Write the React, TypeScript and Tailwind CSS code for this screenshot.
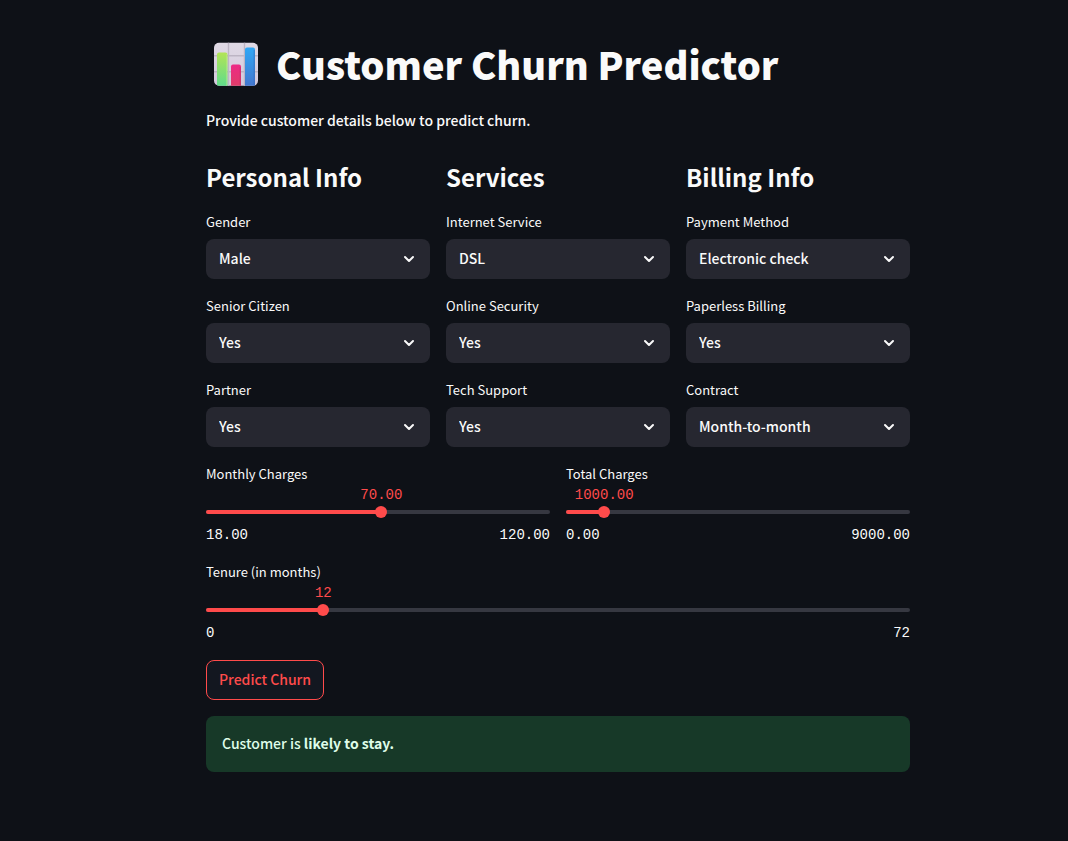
import { useId, useState } from "react";

type SelectFieldProps = { label: string; options: string[] };

function SelectField({ label, options }: SelectFieldProps) {
  const id = useId();
  return (
    <div className="flex flex-col gap-1.5">
      <label htmlFor={id} className="text-[13px] leading-[22px]">
        {label}
      </label>
      <div className="relative">
        <select
          id={id}
          className="h-10 w-full appearance-none rounded-lg bg-[#262730] pr-10 pb-0.5 pl-[13px] text-sm font-medium outline-none focus-visible:ring-1 focus-visible:ring-[#ff4b4b]"
        >
          {options.map((option) => (
            <option key={option}>{option}</option>
          ))}
        </select>
        <svg
          viewBox="0 0 20 20"
          className="pointer-events-none absolute top-2.5 right-[11px] size-5"
          fill="none"
          stroke="currentColor"
          strokeWidth="2"
          strokeLinecap="round"
          strokeLinejoin="round"
          aria-hidden="true"
        >
          <path d="M6 8l4 4 4-4" />
        </svg>
      </div>
    </div>
  );
}

type SliderFieldProps = {
  label: string;
  min: number;
  max: number;
  initial: number;
  digits: number;
};

function SliderField({ label, min, max, initial, digits }: SliderFieldProps) {
  const id = useId();
  const [value, setValue] = useState(initial);
  const percent = ((value - min) / (max - min)) * 100;
  return (
    <div className="flex flex-col">
      <label htmlFor={id} className="pb-0.5 text-[13px] leading-[22px]">
        {label}
      </label>
      <div className="relative h-4 font-['Liberation_Mono',monospace] text-sm leading-4 text-[#ff4b4b]">
        <output
          htmlFor={id}
          className="absolute top-0 -translate-x-1/2"
          style={{ left: `${percent}%` }}
        >
          {value.toFixed(digits)}
        </output>
      </div>
      <div className="relative flex h-[18px] items-center">
        <div className="h-1 w-full overflow-hidden rounded-full bg-[#363841]">
          <div className="h-full bg-[#ff4b4b]" style={{ width: `${percent}%` }} />
        </div>
        <input
          id={id}
          type="range"
          min={min}
          max={max}
          value={value}
          onChange={(event) => setValue(Number(event.target.value))}
          className="absolute -inset-x-1.5 inset-y-0 w-[calc(100%+12px)] cursor-pointer appearance-none bg-transparent outline-none [&::-webkit-slider-thumb]:size-3 [&::-webkit-slider-thumb]:appearance-none [&::-webkit-slider-thumb]:rounded-full [&::-webkit-slider-thumb]:bg-[#ff4b4b]"
        />
      </div>
      <div className="flex justify-between pt-1.5 pb-0.5 font-['Liberation_Mono',monospace] text-sm leading-4">
        <span>{min.toFixed(digits)}</span>
        <span>{max.toFixed(digits)}</span>
      </div>
    </div>
  );
}

function ChartIcon() {
  return (
    <svg viewBox="0 0 44 44" className="size-11" aria-hidden="true">
      <defs>
        <linearGradient id="paper" x1="0" y1="0" x2="0" y2="1">
          <stop offset="0" stopColor="#e0dae5" />
          <stop offset="1" stopColor="#d3c9dc" />
        </linearGradient>
        <linearGradient id="green" x1="0" y1="0" x2="0" y2="1">
          <stop offset="0" stopColor="#b3e456" />
          <stop offset="1" stopColor="#5fdc8b" />
        </linearGradient>
        <linearGradient id="pink" x1="0" y1="0" x2="0" y2="1">
          <stop offset="0" stopColor="#ed2a86" />
          <stop offset="1" stopColor="#e03c68" />
        </linearGradient>
        <linearGradient id="blue" x1="0" y1="0" x2="0" y2="1">
          <stop offset="0" stopColor="#31a8f5" />
          <stop offset="1" stopColor="#4377cf" />
        </linearGradient>
        <clipPath id="sheet">
          <rect y="0.8" width="44" height="43" rx="5" />
        </clipPath>
      </defs>
      <g clipPath="url(#sheet)">
        <rect width="44" height="44" fill="url(#paper)" />
        <path
          d="M14.5 0v44M30.5 0v44M0 13.8h44M0 29.8h44"
          stroke="#bdb5c4"
          strokeWidth="1.4"
        />
        <path d="M3 44V12.5a2 2 0 0 1 2-2h6.500a2 2 0 0 1 2 2V44z" fill="url(#green)" />
        <path d="M17 44V24.500a2 2 0 0 1 2-2h6a2 2 0 0 1 2 2V44z" fill="url(#pink)" />
        <path d="M31 44V7.500a2 2 0 0 1 2-2h6a2 2 0 0 1 2 2V44z" fill="url(#blue)" />
        <path d="M12.600 12v32" stroke="#c4ec82" strokeWidth="0.8" opacity="0.6" />
        <path d="M26.200 25v19" stroke="#b72f68" strokeWidth="0.9" opacity="0.6" />
        <path d="M40.200 8v36" stroke="#3263b5" strokeWidth="0.9" opacity="0.6" />
      </g>
    </svg>
  );
}

const sections: { title: string; fields: SelectFieldProps[] }[] = [
  {
    title: "Personal Info",
    fields: [
      { label: "Gender", options: ["Male", "Female"] },
      { label: "Senior Citizen", options: ["Yes", "No"] },
      { label: "Partner", options: ["Yes", "No"] },
    ],
  },
  {
    title: "Services",
    fields: [
      { label: "Internet Service", options: ["DSL", "Fiber optic", "No"] },
      { label: "Online Security", options: ["Yes", "No"] },
      { label: "Tech Support", options: ["Yes", "No"] },
    ],
  },
  {
    title: "Billing Info",
    fields: [
      {
        label: "Payment Method",
        options: ["Electronic check", "Mailed check", "Bank transfer", "Credit card"],
      },
      { label: "Paperless Billing", options: ["Yes", "No"] },
      { label: "Contract", options: ["Month-to-month", "One year", "Two year"] },
    ],
  },
];

export default function App() {
  return (
    <div className="flex min-h-screen justify-center bg-[#0e1117] pr-4 pl-16 font-['Noto_Sans_CJK_SC',sans-serif] text-[#fafafa]">
      <main className="flex w-full max-w-[704px] flex-col pt-9 pb-16">
        <h1 className="flex items-center gap-[18px] pl-2 text-[38px] leading-14 font-black">
          <ChartIcon />
          Customer Churn Predictor
        </h1>
        <p className="pt-4 text-sm leading-6 font-medium">
          Provide customer details below to predict churn.
        </p>
        <div className="grid grid-cols-3 gap-4 pt-[26px]">
          {sections.map((section) => (
            <section key={section.title} className="flex flex-col gap-4">
              <h2 className="text-2xl leading-[37px] font-semibold">{section.title}</h2>
              {section.fields.map((field) => (
                <SelectField key={field.label} {...field} />
              ))}
            </section>
          ))}
        </div>
        <div className="grid grid-cols-2 gap-4 pt-4">
          <SliderField label="Monthly Charges" min={18} max={120} initial={70} digits={2} />
          <SliderField label="Total Charges" min={0} max={9000} initial={1000} digits={2} />
        </div>
        <div className="pt-4">
          <SliderField label="Tenure (in months)" min={0} max={72} initial={12} digits={0} />
        </div>
        <button
          type="button"
          className="mt-[17px] h-10 cursor-pointer self-start rounded-lg border border-[#ff4b4b] bg-[#131720] px-3 pb-0.5 text-sm font-medium text-[#ff4b4b]"
        >
          Predict Churn
        </button>
        <div
          role="status"
          className="mt-4 rounded-lg bg-[#173928] px-4 pt-[15px] pb-[17px] text-sm leading-6 font-medium text-[#dffde9]"
        >
          Customer is <strong className="font-bold">likely to stay.</strong>
        </div>
      </main>
    </div>
  );
}
